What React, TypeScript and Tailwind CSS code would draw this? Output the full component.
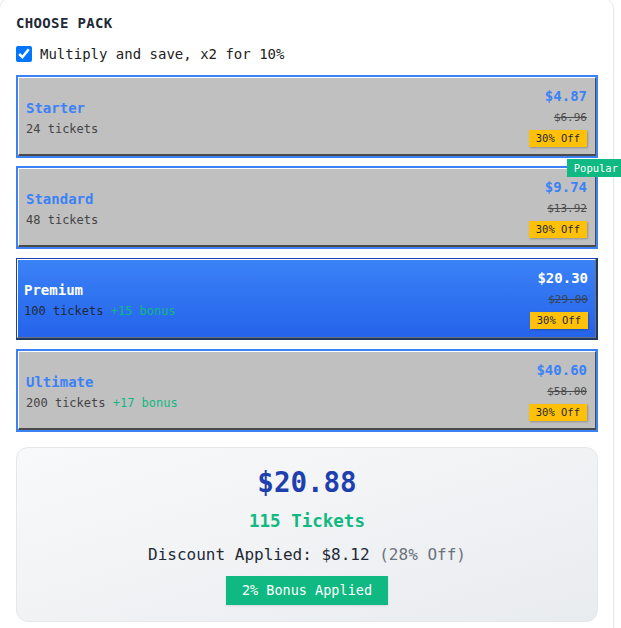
import React, { useState } from "react";

type Pack = {
  id: string;
  name: string;
  tickets: number;
  bonus?: number;
  price: string;
  original: string;
  popular?: boolean;
};

const packs: Pack[] = [
  { id: "starter", name: "Starter", tickets: 24, price: "$4.87", original: "$6.96" },
  { id: "standard", name: "Standard", tickets: 48, price: "$9.74", original: "$13.92", popular: true },
  { id: "premium", name: "Premium", tickets: 100, bonus: 15, price: "$20.30", original: "$29.00" },
  { id: "ultimate", name: "Ultimate", tickets: 200, bonus: 17, price: "$40.60", original: "$58.00" },
];

const PackCard = ({ pack, selected, onSelect }: { pack: Pack; selected: boolean; onSelect: () => void }) => {
  return (
    <div
      className={
        selected
          ? "relative mt-px mb-px cursor-pointer border-t border-l border-b-2 border-r-2 border-[#1e40af] border-b-[#1e3a5f] border-r-[#1e3a5f]"
          : "relative cursor-pointer border-2 border-[#3b82f6]"
      }
      onClick={onSelect}
    >
      <div
        className={
          selected
            ? "flex h-[79px] items-center justify-between border-t border-l border-b border-r border-white border-b-[#6b7280] border-r-[#6b7280] bg-linear-to-b from-[#3b82f6] to-[#2563eb] pl-[6px] pr-[7px]"
            : "flex h-[79px] items-center justify-between border-t border-l border-b-2 border-r border-white border-b-[#4a4a4a] border-r-[#4a4a4a] bg-[#c0c0c0] pl-[7px] pr-[8px]"
        }
      >
        <div className="flex flex-col pt-[2px]">
          <span className={selected ? "text-sm leading-5 font-bold text-white" : "text-sm leading-5 font-bold text-[#3b82f6]"}>
            {pack.name}
          </span>
          <span className={selected ? "mt-[3px] text-xs leading-4 text-[#1f2937]" : "mt-[3px] text-xs leading-4 text-[#444]"}>
            {pack.tickets} tickets
            {pack.bonus && <span className="text-[#10b981]"> +{pack.bonus} bonus</span>}
          </span>
        </div>
        <div className="flex flex-col items-end">
          <span className={selected ? "text-sm leading-5 font-bold text-white" : "text-sm leading-5 font-bold text-[#3b82f6]"}>
            {pack.price}
          </span>
          <span className={selected ? "mt-1 text-[11px] leading-4 text-[#374151] line-through" : "mt-1 text-[11px] leading-4 text-[#4b4b4b] line-through"}>
            {pack.original}
          </span>
          <span className="mt-1 bg-[#ffc107] px-[7px] text-[10.5px] leading-[17px] text-[#1f2937] shadow-[1px_1px_2px_rgba(0,0,0,0.25)]">
            30% Off
          </span>
        </div>
      </div>
      {pack.popular && (
        <span className="absolute -top-[9px] -right-[29px] bg-[#10b981] px-[7px] text-[10.5px] leading-[18px] text-white">
          Popular
        </span>
      )}
    </div>
  );
};

export default function App() {
  const [selected, setSelected] = useState("premium");
  const [multiply, setMultiply] = useState(true);

  return (
    <div className="h-[628px] w-full overflow-hidden bg-white font-['DejaVu_Sans_Mono',monospace]">
      <div className="-mt-[3px] -ml-px w-[615px] rounded-t-xl border border-[#e5e7eb] pt-[15px] pl-4 pr-[15px] pb-6">
        <h2 className="text-sm leading-5 font-bold tracking-wide text-[#1f2937] uppercase">Choose Pack</h2>
        <label className="mt-[11px] flex h-5 items-center gap-2 text-sm text-[#222]">
          <input
            type="checkbox"
            checked={multiply}
            onChange={(e) => setMultiply(e.target.checked)}
            className="m-0 h-4 w-4 accent-[#0075ff]"
          />
          Multiply and save, x2 for 10%
        </label>

        <div className="mt-[11px] flex flex-col gap-[8px]">
          {packs.map((p) => (
            <PackCard key={p.id} pack={p} selected={selected === p.id} onSelect={() => setSelected(p.id)} />
          ))}
        </div>

        <div className="mt-[15px] flex flex-col items-center rounded-xl border border-[#e5e7eb] bg-linear-to-br from-[#f8f9fa] to-[#e9ecef] pt-4 pb-4">
          <div className="text-[27.5px] leading-9 font-bold text-[#1e40af]">$20.88</div>
          <div className="mt-2 text-[17.5px] leading-[26px] font-bold text-[#10b981]">115 Tickets</div>
          <div className="mt-[9px] text-base leading-6 text-[#1f2937]">
            Discount Applied: $8.12 <span className="text-[#6b7280]">(28% Off)</span>
          </div>
          <div className="mt-[9px] bg-[#10b981] px-4 py-[6px] text-[13.5px] leading-[17px] text-white shadow-[0_1px_2px_rgba(0,0,0,0.1)]">
            2% Bonus Applied
          </div>
        </div>
      </div>
    </div>
  );
}
